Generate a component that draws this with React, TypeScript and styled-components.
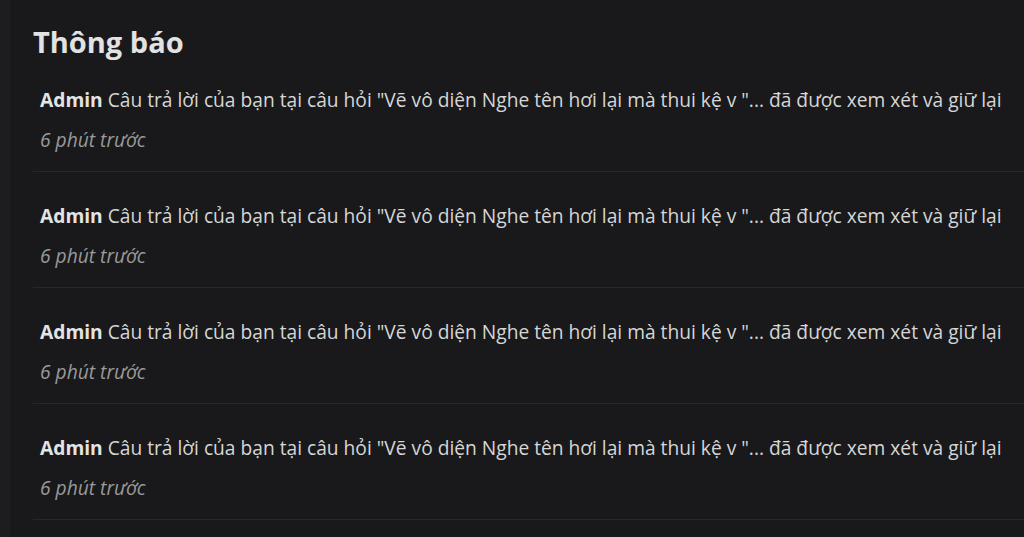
import React from "react";
import styled, { createGlobalStyle } from "styled-components";

const Global = createGlobalStyle`
  html, body { margin: 0; padding: 0; background: #19191b; }
  body { font-family: "Open Sans", "Noto Sans", sans-serif; }
`;

const Page = styled.div`
  display: flex;
  min-height: 537px;
  background: #19191b;
`;

const Edge = styled.div`
  width: 10px;
  flex: none;
  background: #1d1d1f;
`;

const Panel = styled.section`
  flex: 1;
  padding: 22px 0 0 23px;
  display: flex;
  flex-direction: column;
`;

const Title = styled.h2`
  margin: 0 0 24px 0;
  font-size: 29px;
  line-height: 40px;
  font-weight: 700;
  color: #e2e2e2;
`;

const List = styled.ul`
  list-style: none;
  margin: 0;
  padding: 0;
`;

const Item = styled.li<{ $first?: boolean }>`
  padding: ${(p) => (p.$first ? "0" : "30px")} 0 18px 7px;
  border-bottom: 1px solid #28282a;
  display: flex;
  flex-direction: column;
  gap: 13px;
`;

const Message = styled.div`
  font-size: 19.2px;
  line-height: 28px;
  color: #d6d6d6;
  white-space: nowrap;
`;

const Author = styled.strong`
  font-weight: 700;
  color: #e4e4e4;
`;

const Time = styled.div`
  font-size: 19.2px;
  line-height: 26px;
  font-style: italic;
  color: #9a9a9a;
`;

const items = [1, 2, 3, 4];

export default function App() {
  return (
    <>
      <Global />
      <Page>
        <Edge />
        <Panel>
          <Title>Thông báo</Title>
          <List>
            {items.map((i) => (
              <Item key={i} $first={i === 1}>
                <Message>
                  <Author>Admin</Author> Câu trả lời của bạn tại câu hỏi "Vẽ vô diện Nghe tên hơi lại mà thui kệ v "... đã được xem xét và giữ lại
                </Message>
                <Time>6 phút trước</Time>
              </Item>
            ))}
          </List>
        </Panel>
      </Page>
    </>
  );
}
